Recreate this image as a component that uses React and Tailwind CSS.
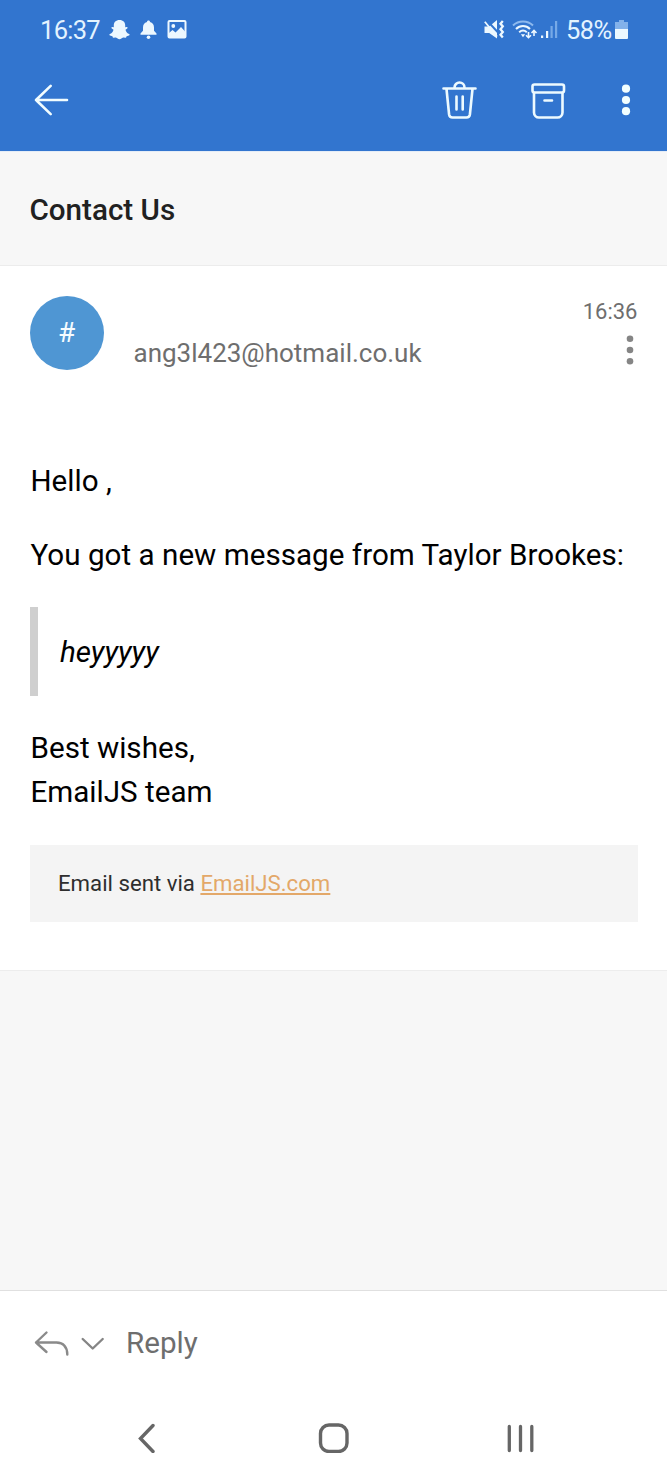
import React from 'react';

function StatusBar() {
  return (
    <div className="flex h-[60px] items-center justify-between pl-10 pr-[39px] text-[25.500px] leading-none text-[#e3f3ff]">
      <div className="flex items-center">
        <span className="w-[60px] whitespace-nowrap pt-0.5 tracking-[-0.7px]">16:37</span>
        <svg className="ml-[9px] h-5 w-[21px]" viewBox="0 0 21 20" fill="#edf8ff">
          <path d="M10.500 0C6.800 0 4.800 2.300 4.800 5.200v2l-1.600-.3c-.9 0-1.100 1-.4 1.500l1.700 1.300C4 12 2.600 13.400.8 14c-.6.3-.4 1.200.2 1.500l2.400.7.6 1.500 2.900-.1c1.300.7 2.200 1.700 3.600 1.700s2.300-1 3.600-1.700l2.900.1.6-1.500 2.400-.7c.6-.3.8-1.200.2-1.500-1.800-.6-3.200-2-3.700-4.300l1.700-1.300c.7-.5.500-1.500-.4-1.500l-1.600.3v-2C16.200 2.300 14.200 0 10.500 0z" />
        </svg>
        <svg className="ml-[10px] h-5 w-[17px]" viewBox="0 0 17 20" fill="#edf8ff">
          <path d="M8.500.5c-1 0-1.400.6-1.500 1.400C4.300 2.600 3 4.600 3 7.500v3.300L.5 13.500v1.200h16v-1.200L14 10.800V7.500c0-2.900-1.300-4.900-4-5.600-.1-.8-.5-1.400-1.500-1.400z" />
          <circle cx="8.500" cy="17.300" r="1.800" />
        </svg>
        <svg className="ml-[10px] h-5 w-5" viewBox="0 0 20 20">
          <rect x="1.500" y="1" width="17" height="16.500" rx="1" fill="none" stroke="#edf8ff" strokeWidth="2" />
          <circle cx="6.300" cy="6" r="1.900" fill="#edf8ff" />
          <path d="M2 17v-4l3.500-3 3 2.500L14 7l4 4.500V17z" fill="#edf8ff" />
        </svg>
      </div>
      <div className="flex items-center">
        <svg className="h-5 w-[21px]" viewBox="0 0 21 20">
          <path d="M.5 6.500h4.700L13 0v18.500L5.200 13H.5z" fill="#edf8ff" />
          <path d="M2.500 0L15 13.500" stroke="#3275cf" strokeWidth="2" />
          <path d="M.8 1.800L13 16.500" stroke="#edf8ff" strokeWidth="1.800" />
          <path d="M18.800 1l-2.300 2.700 2.300 2.700-2.300 2.900 2.300 2.800-2.300 2.700 2.300 2.700" fill="none" stroke="#edf8ff" strokeWidth="2.300" />
        </svg>
        <svg className="ml-[7px] h-5 w-[26px]" viewBox="0 0 26 20" fill="none">
          <path d="M1 5.500C6.500.1 15.500.1 21 5.500" stroke="#8db9ee" strokeWidth="2" />
          <path d="M4 9c4-4 10-4 14 0M7.200 12.300c2.400-2.200 5.200-2.200 7.600 0" stroke="#edf8ff" strokeWidth="2" />
          <path d="M8.800 14.300h4.400L11 17.300z" fill="#edf8ff" />
          <path d="M16.500 12v5.700m-2.500-2.500l2.500 2.500 2.500-2.500M22 16V10.500M19.500 13L22 10.500l2.500 2.500" stroke="#edf8ff" strokeWidth="1.600" />
        </svg>
        <svg className="ml-[3px] h-5 w-[18px]" viewBox="0 0 18 20">
          <path d="M0 15.500h2.200v2.500H0zM5 11h2.200v7H5z" fill="#edf8ff" />
          <path d="M9.500 6h2.200v12H9.500zM14 1h2.200v17H14z" fill="#76a9e7" />
        </svg>
        <span className="ml-[7px] w-[46px] whitespace-nowrap pt-0.5 tracking-[-0.6px]">58%</span>
        <svg className="ml-[3px] h-5 w-[13px]" viewBox="0 0 13 20">
          <path d="M4 0h5v2h4v7H0V2h4z" fill="#82b1ea" />
          <path d="M0 9h13v9a1 1 0 01-1 1H1a1 1 0 01-1-1z" fill="#edf8ff" />
        </svg>
      </div>
    </div>
  );
}

function Toolbar() {
  return (
    <div className="flex h-20 items-center justify-between pl-[34px] pr-9">
      <svg className="h-9 w-9" viewBox="0 0 36 36" fill="none" stroke="#f2fdff" strokeWidth="2.600" strokeLinecap="round" strokeLinejoin="round">
        <path d="M16.700 3.900L2 18l14.700 14.100M2 18h31" />
      </svg>
      <div className="flex items-center">
        <svg className="h-10 w-9" viewBox="0 0 36 40" fill="none" stroke="#edfaff" strokeWidth="2.600" strokeLinecap="round" strokeLinejoin="round">
          <path d="M1.500 8.500h32M12.500 8v-.5a5 5 0 0110 0V8M4.500 9l2.600 25.500a3.500 3.500 0 003.500 3h13.800a3.500 3.500 0 003.500-3L30.500 9M14.500 16.500v13M20.700 16.500v13" />
        </svg>
        <svg className="ml-[52px] h-10 w-9" viewBox="0 0 36 40" fill="none" stroke="#edfaff" strokeWidth="2.600" strokeLinecap="round" strokeLinejoin="round">
          <rect x="2.500" y="4.500" width="31.500" height="8" rx="2" />
          <path d="M4 13v19.500a5 5 0 005 5h18.500a5 5 0 005-5V13M14.500 20.500h7.500" />
        </svg>
        <svg className="ml-[55px] h-8 w-2.500" viewBox="0 0 10 32" fill="#f2ffff">
          <circle cx="5" cy="4.700" r="4.100" />
          <circle cx="5" cy="16" r="4.100" />
          <circle cx="5" cy="27.200" r="4.100" />
        </svg>
      </div>
    </div>
  );
}

function Sender() {
  return (
    <div className="flex h-[75px]">
      <div className="mt-[0.500px] flex size-[74px] shrink-0 items-center justify-center rounded-full bg-[#4f96d3] pt-px text-[28px] leading-none text-[#f5fcff]">
        #
      </div>
      <div className="ml-[30px] flex-1 pt-[42px] text-[26px] leading-8 text-[#6e6e6e]">ang3l423@hotmail.co.uk</div>
      <div className="flex flex-col items-end">
        <span className="mt-1 text-[22px] leading-[26px] text-[#6e6e6e]">16:36</span>
        <svg className="mt-2.5 mr-1 h-[30px] w-2" viewBox="0 0 8 30" fill="#858585">
          <circle cx="4" cy="3.800" r="3.300" />
          <circle cx="4" cy="15" r="3.300" />
          <circle cx="4" cy="26.200" r="3.300" />
        </svg>
      </div>
    </div>
  );
}

function Body() {
  return (
    <div className="mt-[88.500px] text-[29.600px] leading-[44.400px] text-black">
      <p className="pl-px">Hello ,</p>
      <p className="mt-[29.600px] whitespace-nowrap pl-px tracking-[0.02px]">You got a new message from Taylor Brookes:</p>
      <blockquote className="mt-[30px] border-l-8 border-[#cfcfcf] pb-[21.600px] pl-[22.500px] pt-[23px] italic">heyyyyy</blockquote>
      <p className="mt-[30px] pl-px">
        Best wishes,
        <br />
        EmailJS team
      </p>
      <div className="mt-[30px] h-[77px] bg-[#f4f4f4] py-[22px] pl-[28.500px] pr-7 text-[22.200px] leading-[33px] text-[#2e2e2e]">
        Email sent via{' '}
        <a href="#" className="text-[#e3a869] underline">EmailJS.com</a>
      </div>
    </div>
  );
}

function ReplyBar() {
  return (
    <div className="flex h-[106px] items-center border-t border-[#e0e0e0] pl-[34px]">
      <svg className="h-[30px] w-9" viewBox="0 0 36 30" fill="none" stroke="#8a8a8a" strokeWidth="2.400" strokeLinecap="round" strokeLinejoin="round">
        <path d="M12.500 3.500L2 13.500l10.500 9.500M2 13.500h20.500c7 0 10.800 4.500 10.800 12" />
      </svg>
      <svg className="ml-[11px] h-4 w-6" viewBox="0 0 24 16" fill="none" stroke="#858585" strokeWidth="2.400" strokeLinecap="round" strokeLinejoin="round">
        <path d="M1.700 3L11.700 12.500l10-9.500" />
      </svg>
      <span className="ml-[21px] text-[29.600px] text-[#6e6e6e]">Reply</span>
    </div>
  );
}

function NavigationBar() {
  return (
    <div className="flex flex-1 items-center justify-between pb-[6px] pl-[137px] pr-[132px]">
      <svg className="h-8 w-5" viewBox="0 0 20 32" fill="none" stroke="#666" strokeWidth="3.400" strokeLinecap="round" strokeLinejoin="miter">
        <path d="M16 4.500L3.500 17.500l12.500 13" />
      </svg>
      <svg className="ml-[4px] size-8" viewBox="0 0 32 32" fill="none" stroke="#666" strokeWidth="3.400">
        <rect x="2.500" y="4" width="26.500" height="26.500" rx="8.500" />
      </svg>
      <svg className="h-8 w-[28px]" viewBox="0 0 28 32" stroke="#666" strokeWidth="3.300" strokeLinecap="round">
        <path d="M2.300 5.500v24M13.500 5.500v24M24.800 5.500v24" />
      </svg>
    </div>
  );
}

export default function App() {
  return (
    <div className="flex h-[1483px] w-[667px] flex-col overflow-hidden bg-white font-['Roboto',sans-serif]">
      <header className="h-[151px] shrink-0 bg-[#3275cf]">
        <StatusBar />
        <Toolbar />
      </header>
      <div className="flex h-[115px] shrink-0 items-center border-y border-t-[#e5edf7] border-b-[#ececec] bg-[#f7f7f7] px-[29.500px] pt-[3px] text-[29.600px] font-medium text-[#212121]">
        <h1>Contact Us</h1>
      </div>
      <main className="h-[704px] shrink-0 px-[29.500px] pt-[29px]">
        <Sender />
        <Body />
      </main>
      <div className="h-[320px] shrink-0 border-t border-[#ededed] bg-[#f7f7f7]" />
      <ReplyBar />
      <NavigationBar />
    </div>
  );
}
